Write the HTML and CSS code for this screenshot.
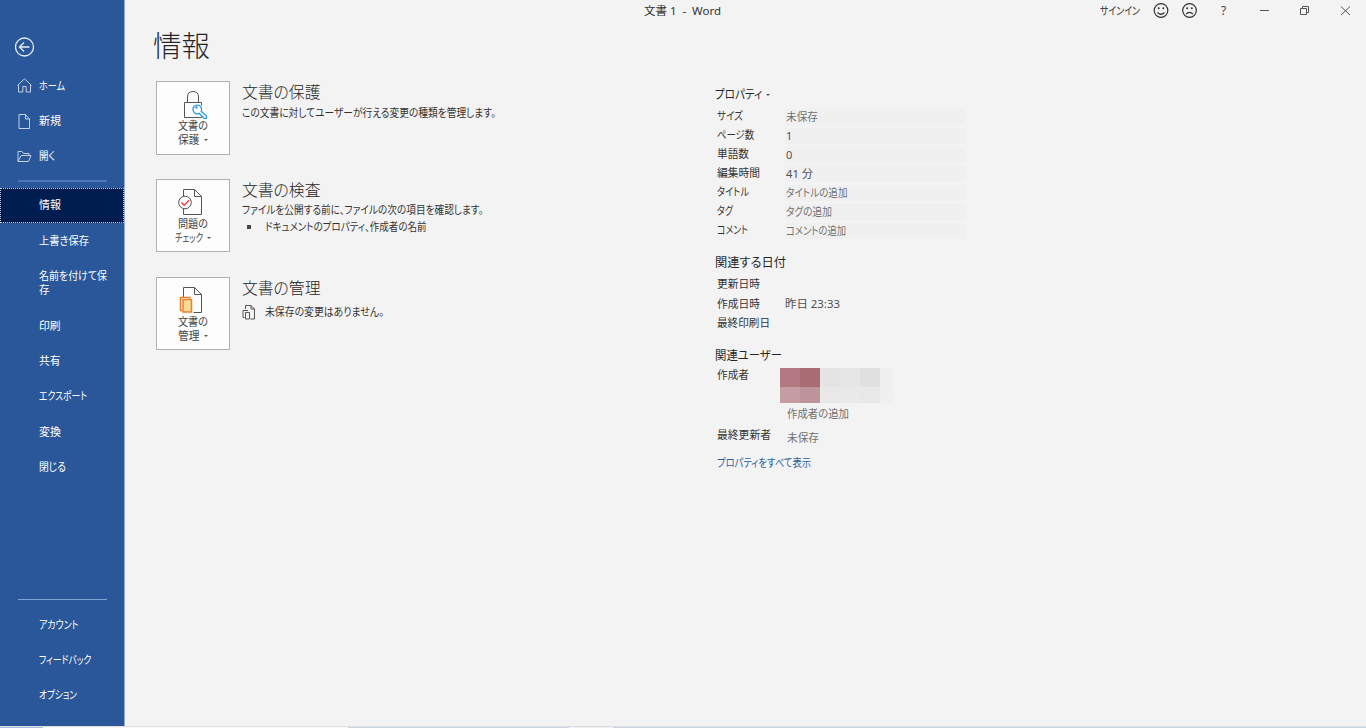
FILE: index.html
```html
<!DOCTYPE html>
<html lang="ja">
<head>
<meta charset="utf-8">
<title>文書 1 - Word</title>
<link rel="stylesheet" href="styles.css">
</head>
<body>
<div class="app">
  <nav class="sidebar">
    <svg class="back" width="20" height="20" viewBox="0 0 20 20"><circle cx="9.500" cy="10" r="9"/><path d="M14.500 10H4.500M9 5.500L4.500 10l4.500 4.500"/></svg>
    <a class="item"><svg class="glyph" width="15" height="15" viewBox="0 0 15 15"><path d="M1.500 6.500V14h4.300V8.500h3.400V14h4.300V6.500M.5 7.400L7.500.8l7 6.600"/></svg><span class="fit" data-w="26">ホーム</span></a>
    <a class="item"><svg class="glyph" width="15" height="15" viewBox="0 0 15 15"><path d="M2 .5h6.500L12.500 5v9.500H2zM8.500.5V5h4"/></svg><span class="fit" data-w="22">新規</span></a>
    <a class="item"><svg class="glyph" width="15" height="15" viewBox="0 0 15 15"><path d="M1 12.500V2.500h4l1.500 2h5.500v2M1 12.500h10.500l2.500-6H4.200z"/></svg><span class="fit" data-w="16">開く</span></a>
    <div class="rule"></div>
    <a class="item selected"><span class="fit" data-w="22">情報</span></a>
    <a class="item"><span class="fit" data-w="50">上書き保存</span></a>
    <a class="item two"><span class="fit" data-w="68">名前を付けて保</span><span class="fit" data-w="10.500">存</span></a>
    <a class="item"><span class="fit" data-w="21.500">印刷</span></a>
    <a class="item"><span class="fit" data-w="21.500">共有</span></a>
    <a class="item"><span class="fit" data-w="48">エクスポート</span></a>
    <a class="item"><span class="fit" data-w="22">変換</span></a>
    <a class="item"><span class="fit" data-w="27">閉じる</span></a>
    <div class="rule lower"></div>
    <a class="item"><span class="fit" data-w="39.500">アカウント</span></a>
    <a class="item"><span class="fit" data-w="52.500">フィードバック</span></a>
    <a class="item"><span class="fit" data-w="38">オプション</span></a>
  </nav>
  <div class="page">
    <header class="titlebar">
      <span class="doc fit" data-w="77">文書 1 &nbsp;-&nbsp; Word</span>
      <span class="signin fit" data-w="40">サインイン</span>
      <svg class="controls" width="226" height="22" viewBox="1140 0 226 22">
        <g class="face"><circle cx="1161" cy="10.500" r="6.800"/><path d="M1157.500 12.500q3.500 3.500 7 0"/><circle cx="1189.500" cy="10.500" r="6.800"/><path d="M1186 14.200q3.500-3.500 7 0"/></g>
        <g class="eyes"><circle cx="1158.700" cy="8.300" r="1"/><circle cx="1163.300" cy="8.300" r="1"/><circle cx="1187.200" cy="8.300" r="1"/><circle cx="1191.800" cy="8.300" r="1"/></g>
        <text x="1221" y="15">?</text>
        <path d="M1260 10.500h9M1300.500 8.500h6v6h-6zM1302.500 8.500v-2h6v6h-2M1341 6.500l9 8.500M1350 6.500l-9 8.500"/>
      </svg>
    </header>
    <h1><span class="fit" data-w="57">情報</span></h1>
    <main>
      <div class="sections">
        <section>
          <button class="tile">
            <svg width="72" height="37" viewBox="1 1 72 37"><path d="M28.500 21.500V36.500h17V21.500zM31.500 21.500V16q0-5.500 5.500-5.500t5.500 5.500v5.500"/><path class="halo" d="M36.500 27.700a4.300 4.300 0 1 0 8.600 0a4.300 4.300 0 1 0-8.600 0M44 31l5.500 5"/><path class="key" d="M45.200 30.200l5.300 4.800v2.500h-2.300l-5-5.200a4.300 4.300 0 1 1 2-2.100z"/><circle class="key" cx="40.500" cy="26.500" r=".6"/></svg>
            <span class="line"><span class="fit" data-w="30">文書の</span></span>
            <span class="line"><span class="fit" data-w="21.500">保護</span><i class="caret"></i></span>
          </button>
          <div class="info"><h2 class="fit" data-w="78.500">文書の保護</h2><p class="fit first" data-w="254">この文書に対してユーザーが行える変更の種類を管理します。</p></div>
        </section>
        <section>
          <button class="tile short">
            <svg width="72" height="37" viewBox="1 1 72 37"><path d="M27.500 10.500H38.500l7 7V35.500H27.500zM38.500 10.500v7h7"/><circle class="disc" cx="29" cy="23.500" r="6.300"/><path class="check" d="M25.500 23.500l2.700 2.700 4.800-5"/></svg>
            <span class="line"><span class="fit" data-w="30">問題の</span></span>
            <span class="line up"><span class="fit" data-w="28">チェック</span><i class="caret"></i></span>
          </button>
          <div class="info"><h2 class="fit" data-w="78.500">文書の検査</h2><p class="fit" data-w="241.500">ファイルを公開する前に、ファイルの次の項目を確認します。</p><div class="bullet"><i class="square"></i><span class="fit" data-w="161.500">ドキュメントのプロパティ、作成者の名前</span></div></div>
        </section>
        <section>
          <button class="tile short">
            <svg width="72" height="37" viewBox="1 1 72 37"><path d="M27.500 20V10.500H38.500l7 7V35.500H37.500M38.500 10.500v7h7"/><path class="orange" d="M26 33.500h-1.500v-13h9.500v1"/><path class="sheet" d="M27 22.500h8.500v12.500H27z"/></svg>
            <span class="line"><span class="fit" data-w="30">文書の</span></span>
            <span class="line up"><span class="fit" data-w="21.500">管理</span><i class="caret"></i></span>
          </button>
          <div class="info"><h2 class="fit" data-w="78.500">文書の管理</h2><div class="status"><svg width="14" height="15" viewBox="0 0 14 15"><path d="M3.500 4V.5h5.500l3.500 3.500v10h-4M9 .5v3.500h3.500M2.500 12.500H1V5.500H6M3.500 7.500h4v6.500h-4z"/></svg><span class="fit" data-w="119">未保存の変更はありません。</span></div></div>
        </section>
      </div>
      <aside>
        <h3><span class="fit" data-w="47">プロパティ</span><i class="caret"></i></h3>
        <dl class="props">
          <dt><span class="fit" data-w="26">サイズ</span></dt><dd><span class="fit" data-w="32">未保存</span></dd>
          <dt><span class="fit" data-w="37">ページ数</span></dt><dd class="num">1</dd>
          <dt><span class="fit" data-w="32">単語数</span></dt><dd class="num">0</dd>
          <dt><span class="fit" data-w="43">編集時間</span></dt><dd class="num"><span class="fit" data-w="27">41 分</span></dd>
          <dt><span class="fit" data-w="32">タイトル</span></dt><dd><span class="fit" data-w="61.500">タイトルの追加</span></dd>
          <dt><span class="fit" data-w="16">タグ</span></dt><dd><span class="fit" data-w="46">タグの追加</span></dd>
          <dt><span class="fit" data-w="31">コメント</span></dt><dd><span class="fit" data-w="60">コメントの追加</span></dd>
        </dl>
        <h3 class="dates-title"><span class="fit" data-w="71">関連する日付</span></h3>
        <dl class="dates">
          <dt><span class="fit" data-w="43">更新日時</span></dt><dd></dd>
          <dt><span class="fit" data-w="43">作成日時</span></dt><dd><span class="fit" data-w="55">昨日 23:33</span></dd>
          <dt><span class="fit" data-w="53">最終印刷日</span></dt><dd></dd>
        </dl>
        <h3 class="users-title"><span class="fit" data-w="67">関連ユーザー</span></h3>
        <div class="author">
          <span class="fit" data-w="32">作成者</span>
          <div>
            <div class="mosaic"><i class="m1"></i><i class="m2"></i><i class="m3"></i><i class="m4"></i><i class="m5"></i><i class="m6"></i><i class="m7"></i><i class="m8"></i><i class="m9"></i><i class="m10"></i><i class="m11"></i><i class="m12"></i></div>
            <div class="add"><span class="fit" data-w="62">作成者の追加</span></div>
          </div>
        </div>
        <div class="editor"><span class="fit" data-w="54">最終更新者</span><span class="unsaved"><span class="fit" data-w="32">未保存</span></span></div>
        <a class="link"><span class="fit" data-w="94">プロパティをすべて表示</span></a>
      </aside>
    </main>
  </div>
  <footer class="edge"><i class="e1"></i><i class="e2"></i><i class="e3"></i><i class="e4"></i><i class="e5"></i></footer>
</div>
<script src="fit.js"></script>
</body>
</html>
```

FILE: styles.css
```css
* { box-sizing: border-box; }
body { margin: 0; font: 11px/14px "Noto Sans", "Noto Sans CJK JP", sans-serif; color: #333; background: #f3f3f3; }
h1, h2, h3, p, dl, dd, dt { margin: 0; font-weight: 400; }
i { display: block; }
svg { display: block; fill: none; flex: none; }
.app { display: grid; grid-template: 726px 2px / 125px 1fr; width: 1366px; height: 728px; overflow: hidden; }
.fit { display: block; white-space: nowrap; transform-origin: 0 50%; font-feature-settings: "palt"; flex: none; }

.sidebar { background: #2a579a; border-right: 1px solid #8fa9d1; color: #fff; display: flex; flex-direction: column; padding-top: 37px; }
.back { margin: 0 0 11px 15px; stroke: #e8eef7; stroke-width: 1.3; }
.item { height: 35.4px; flex: none; display: flex; align-items: center; padding-left: 39px; }
.glyph { margin: 0 7px 0 -22px; stroke: #c3d0e5; }
.rule { height: 2px; flex: none; background: #4f76b2; margin: 6px 17px 5.5px 18px; }
.lower { height: 1px; background: #7ea3d4; margin-top: auto; margin-bottom: 7px; }
.sidebar .item:last-child { margin-bottom: 13px; }
.selected { background: #001d50; outline: 1px dotted #c4cbd8; outline-offset: -1px; }
.selected + .item { margin-top: .5px; }
.two { height: 49px; flex-direction: column; align-items: flex-start; justify-content: center; }

.page { display: flex; flex-direction: column; }
.titlebar { height: 22px; display: flex; align-items: center; padding-left: 519px; }
.doc { margin-right: 379px; }
.controls { stroke: #555; }
.face { stroke: #333; stroke-width: 1.2; }
.eyes { fill: #333; stroke: none; }
.controls text { fill: #444; stroke: none; font-size: 12px; }
h1 { font-size: 29px; line-height: 40px; height: 59px; padding: 4px 0 0 28px; color: #262626; font-weight: 300; }
main { display: flex; }
.sections { width: 559px; margin-left: 31px; display: flex; flex-direction: column; gap: 24px; }
section { display: flex; gap: 12px; height: 74px; }
.tile { width: 74px; height: 74px; padding: 0; border: 1px solid #b1b1b1; background: #fdfdfd; font: inherit; color: #444; display: flex; flex-direction: column; align-items: center; justify-content: flex-start; stroke: #555; }
.short { height: 73px; }
.line { height: 14px; display: flex; align-items: center; gap: 4px; }
.up { height: 13px; }
.caret { width: 0; height: 0; border: 2.5px solid transparent; border-top-color: #555; border-bottom: 0; }
.key { stroke: #2e9be0; fill: #fff; stroke-width: 1.3; }
.halo { stroke: #fdfdfd; stroke-width: 3; fill: #fdfdfd; }
.disc { fill: #fdfdfd; }
.check { stroke: #e84343; stroke-width: 1.5; }
.orange { stroke: #e8822a; stroke-width: 1.5; }
.sheet { stroke: #e8822a; stroke-width: 1.5; fill: #f8db90; }
h2 { font-size: 16px; line-height: 22px; color: #262626; font-weight: 300; }
.info p { line-height: 18px; }
.info .first { line-height: 20px; }
.bullet { display: flex; align-items: center; height: 15px; }
.square { width: 4px; height: 4px; background: #444; margin: 0 14px 0 5px; }
.status { display: flex; align-items: center; gap: 9px; height: 26px; stroke: #555; }

aside { width: 260px; padding-top: 2px; }
h3 { font-size: 12px; line-height: 20px; height: 23.5px; display: flex; align-items: center; gap: 4px; color: #262626; }
.props, .dates { display: grid; grid-template-columns: 68px 180px; padding-left: 2px; }
.props { grid-auto-rows: 19.1px; }
dt { display: flex; align-items: center; }
.props dt { padding-bottom: 1px; }
dd { display: flex; align-items: center; color: #707070; }
.props dd { height: 16px; margin-top: 2px; padding-left: 1px; background: #f0f0f0; }
.props .num { color: #505050; }
.dates { grid-auto-rows: 19.7px; }
.dates dd { color: #505050; }
.dates-title { margin-top: 12px; height: 22px; }
.users-title { margin-top: 12px; height: 21px; }
.author { display: flex; justify-content: space-between; padding: 2px 82px 0 2px; height: 54px; }
.mosaic { display: grid; grid-template: 19px 16px / repeat(5, 20px) 13px; }
.m1 { background: #b27982; } .m2 { background: #a96c74; } .m3 { background: #e4e4e4; } .m4 { background: #e6e6e6; } .m5 { background: #e1e1e1; } .m6 { background: #efefef; }
.m7 { background: #c59ba4; } .m8 { background: #be939b; } .m9 { background: #e8e8e8; } .m10 { background: #e9e9e9; } .m11 { background: #e8e8e8; } .m12 { background: #f0f0f0; }
.add { padding: 4px 0 0 7px; color: #707070; }
.editor { display: flex; gap: 16px; padding: 8px 0 0 2px; height: 35.5px; }
.unsaved { padding-top: 2.5px; color: #707070; }
.link { display: block; color: #2a6099; padding: 0 0 0 2px; }

.edge { grid-column: 1 / 3; display: flex; border-top: 1px solid #dedede; }
.e1 { width: 43px; background: #a9bfe2; }
.e2 { width: 305px; background: #f8f8f8; }
.e3 { width: 221px; background: #cbd8e3; }
.e4 { width: 44px; background: #edf1f5; }
.e5 { flex: 1; background: #cbd8e3; }
```

FILE: fit.js
```javascript
document.querySelectorAll(".fit").forEach(function (el) {
  var range = document.createRange();
  range.selectNodeContents(el);
  var natural = range.getBoundingClientRect().width;
  var width = parseFloat(el.dataset.w);
  el.style.width = width + "px";
  el.style.transform = "scaleX(" + width / natural + ")";
});
```
